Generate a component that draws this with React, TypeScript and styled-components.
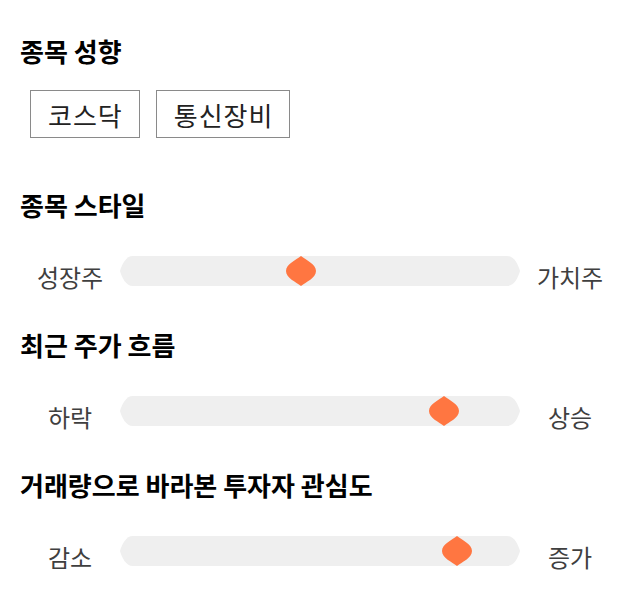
import React from 'react';
import styled, { createGlobalStyle } from 'styled-components';

const GlobalStyle = createGlobalStyle`
  body {
    margin: 0;
    background: #ffffff;
    font-family: "Noto Sans CJK KR", "Noto Sans", sans-serif;
  }
`;

const Page = styled.div`
  width: 640px;
  padding: 36px 20px 40px;
  box-sizing: border-box;
`;

const Section = styled.section<{ $gap: number }>`
  margin-top: ${(p) => p.$gap}px;
`;

const Title = styled.h2<{ $space: number }>`
  margin: 0 0 ${(p) => p.$space}px;
  font-size: 26px;
  line-height: 30px;
  font-weight: 700;
  color: #000;
`;

const TagList = styled.div`
  display: flex;
  gap: 16px;
  padding-left: 10px;
`;

const Tag = styled.span`
  display: flex;
  align-items: center;
  height: 48px;
  padding: 0 16px 0 17px;
  border: 1px solid #8a8a8a;
  box-sizing: border-box;
  font-size: 26px;
  letter-spacing: 1px;
  color: #222;
`;

const SliderRow = styled.div`
  display: grid;
  grid-template-columns: 100px 400px 100px;
  align-items: start;
`;

const EndLabel = styled.span`
  text-align: center;
  font-size: 24px;
  line-height: 30px;
  padding-top: 6px;
  color: #3f3f3f;
`;

const Track = styled.div`
  position: relative;
  height: 30px;
`;

const TrackShape = styled.svg`
  display: block;
`;

const Thumb = styled.svg`
  position: absolute;
  top: 0;
  margin-left: -15px;
`;

function Slider({ left, right, value }: { left: string; right: string; value: number }) {
  const w = 400;
  return (
    <SliderRow>
      <EndLabel>{left}</EndLabel>
      <Track>
        <TrackShape width={w} height={30} viewBox={`0 0 ${w} 30`}>
          <path
            d={`M13 0 H${w - 13} C${w - 6} 0 ${w - 2} 8 ${w} 15 C${w - 2} 22 ${w - 6} 30 ${w - 13} 30 H13 C6 30 2 22 0 15 C2 8 6 0 13 0 Z`}
            fill="#efefef"
          />
        </TrackShape>
        <Thumb width={30} height={30} viewBox="0 0 30 30" style={{ left: `${value * 100}%` }}>
          <path
            d="M15 0 C20 4 30 8 30 15 C30 22 20 26 15 30 C10 26 0 22 0 15 C0 8 10 4 15 0 Z"
            fill="#ff7641"
          />
        </Thumb>
      </Track>
      <EndLabel>{right}</EndLabel>
    </SliderRow>
  );
}

export default function App() {
  return (
    <>
      <GlobalStyle />
      <Page>
        <Section $gap={0}>
          <Title $space={24}>종목 성향</Title>
          <TagList>
            <Tag>코스닥</Tag>
            <Tag>통신장비</Tag>
          </TagList>
        </Section>
        <Section $gap={52}>
          <Title $space={36}>종목 스타일</Title>
          <Slider left="성장주" right="가치주" value={0.4525} />
        </Section>
        <Section $gap={38}>
          <Title $space={36}>최근 주가 흐름</Title>
          <Slider left="하락" right="상승" value={0.81} />
        </Section>
        <Section $gap={38}>
          <Title $space={36}>거래량으로 바라본 투자자 관심도</Title>
          <Slider left="감소" right="증가" value={0.8425} />
        </Section>
      </Page>
    </>
  );
}
